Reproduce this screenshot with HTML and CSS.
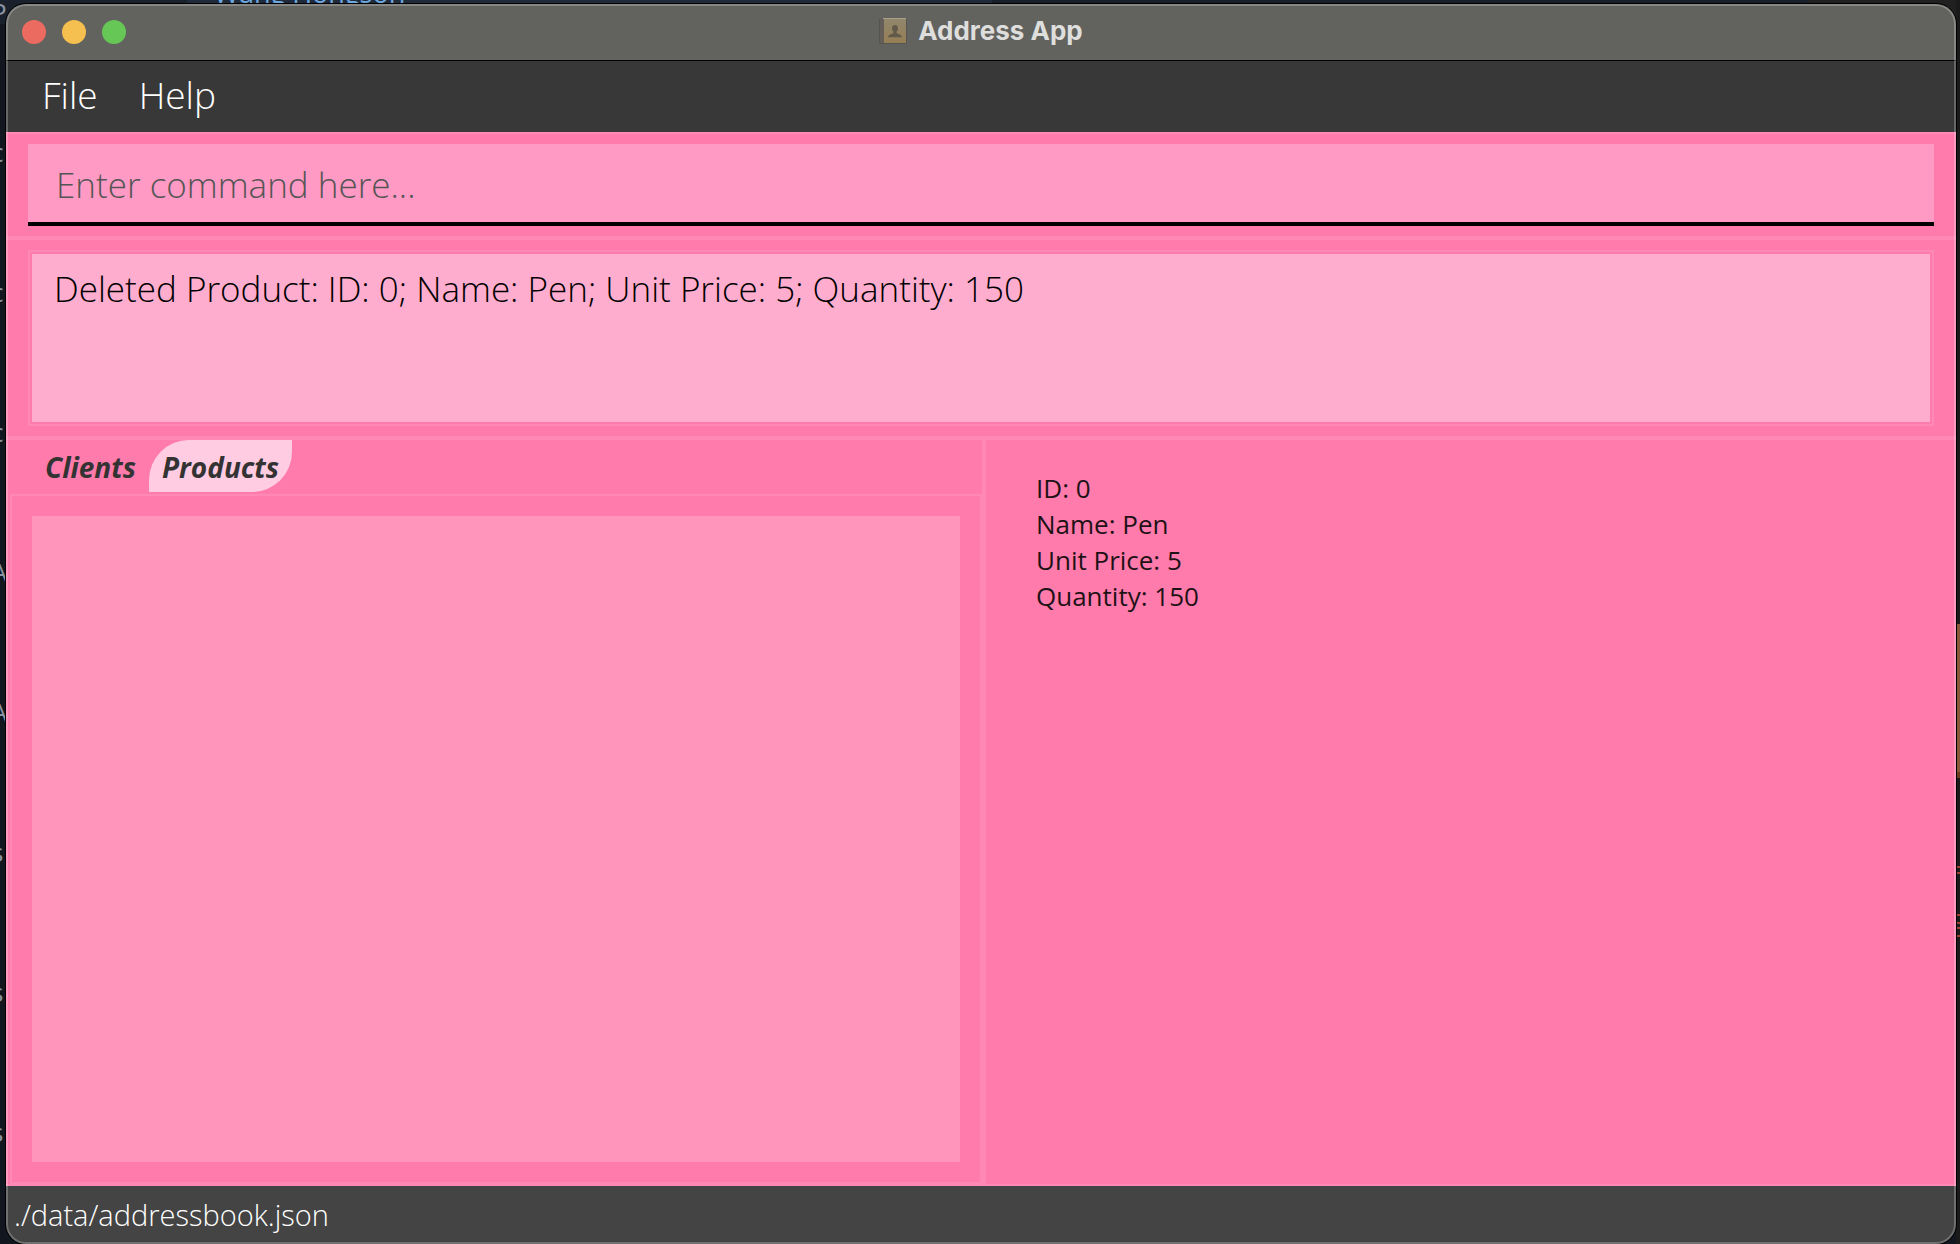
FILE: index.html
```html
<!DOCTYPE html>
<html lang="en">
<head>
<meta charset="utf-8">
<title>Address App</title>
<link rel="stylesheet" href="styles.css">
</head>
<body>
<div class="desktop" aria-hidden="true">
  <div class="behind-top"></div>
  <div class="behind-left">
    <span>P</span><span>c</span><span>c</span><span>c</span><span>A</span><span>A</span><span>s</span><span>s</span><span>s</span>
  </div>
  <div class="behind-right"><div class="behind-note"></div><div class="behind-marks"></div></div>
  <span class="behind-name">Wang Hongson</span>
</div>
<div class="window">
  <header class="titlebar">
    <div class="lights">
      <button class="light close" aria-label="Close"></button>
      <button class="light minimize" aria-label="Minimize"></button>
      <button class="light zoom" aria-label="Zoom"></button>
    </div>
    <h1 class="title">
      <svg class="book" viewBox="0 0 28 26" aria-hidden="true">
        <defs><linearGradient id="cover" x1="0" y1="0" x2="0" y2="1"><stop offset="0" stop-color="#91866c"/><stop offset="1" stop-color="#967f55"/></linearGradient></defs>
        <rect x="0" y="0" width="28" height="26" rx="2" fill="#575450"/>
        <rect x="1" y="0" width="4" height="25" fill="#655d58"/>
        <rect x="5" y="1" width="22" height="24" fill="url(#cover)"/>
        <rect x="4" y="0" width="23" height="1" fill="#aaa087"/>
        <path d="M16 7c-2 0-3 1.300-3 3.200 0 1.800.8 3 1.500 3.600v1.200c-1 1-5.500 1.300-5.500 4.300h14c0-3-4.500-3.300-5.500-4.300v-1.200c.7-.6 1.500-1.800 1.500-3.600C19 8.300 18 7 16 7z" fill="#615a4b"/>
      </svg>
      <span>Address App</span>
    </h1>
  </header>
  <nav class="menubar">
    <button class="menu">File</button>
    <button class="menu">Help</button>
  </nav>
  <main class="content">
    <section class="command-pane">
      <input class="command" type="text" placeholder="Enter command here..." aria-label="Command">
    </section>
    <section class="result-pane">
      <div class="result-frame">
        <textarea class="result" readonly aria-label="Result">Deleted Product: ID: 0; Name: Pen; Unit Price: 5; Quantity: 150</textarea>
      </div>
    </section>
    <div class="split">
      <section class="lists">
        <div class="tabs" role="tablist">
          <button class="tab" role="tab" aria-selected="false">Clients</button>
          <button class="tab selected" role="tab" aria-selected="true">Products</button>
        </div>
        <div class="list-pane"><div class="list"></div></div>
      </section>
      <section class="details">
        <p>ID: 0</p>
        <p>Name: Pen</p>
        <p>Unit Price: 5</p>
        <p>Quantity: 150</p>
      </section>
    </div>
  </main>
  <footer class="status">./data/addressbook.json</footer>
</div>
</body>
</html>
```
FILE: styles.css
```css
* { box-sizing: border-box; }

:root {
  --pink: #ff7bac;
  --line: #ff88b4;
}

body {
  margin: 0;
  height: 100vh;
  padding: 4px 4px 0 6px;
  overflow: hidden;
  background: #12161e;
  font-family: "Open Sans", sans-serif;
}

button {
  border: 0;
  padding: 0;
  background: none;
  font: inherit;
  color: inherit;
}

/* Slivers of other windows that show round the edges */
.desktop {
  position: absolute;
  inset: 0;
  overflow: hidden;
  font-size: 26px;
  color: #8a94a3;
}

.behind-top {
  position: absolute;
  inset: 0 0 auto 0;
  height: 24px;
  background: linear-gradient(90deg, #18212c 187px, #1f2b3b 187px 992px, #18202b 992px 1808px, #202020 1808px);
}

.behind-left {
  position: absolute;
  left: -9px;
  top: -4px;
}

.behind-left span {
  display: block;
  height: 140px;
  line-height: 32px;
}

.behind-right {
  position: absolute;
  inset: 0 0 0 auto;
  width: 4px;
  background: #1a1a1a;
}

.behind-note {
  position: absolute;
  top: 624px;
  right: 0;
  width: 4px;
  height: 154px;
  border-bottom: 6px solid #6b3c20;
  background: #87583a;
}

.behind-marks {
  position: absolute;
  top: 866px;
  right: 0;
  width: 4px;
  height: 72px;
  background: linear-gradient(#a04030 2px, transparent 2px 6px, #a04030 6px 8px, transparent 8px 48px, #a04030 48px 50px, transparent 50px 56px, #a04030 56px 58px, transparent 58px 61px, #a04030 61px 63px, transparent 63px 69px, #a04030 69px 71px, transparent 71px);
}

.behind-name {
  position: absolute;
  left: 214px;
  top: -23px;
  line-height: 32px;
  font-size: 27px;
  color: #6ea8e0;
}

.window {
  position: relative;
  display: flex;
  flex-direction: column;
  height: 100%;
  border-radius: 20px;
  overflow: hidden;
  box-shadow: 0 0 0 1px #000;
}

/* Translucent rim over the window's own colours */
.window::after {
  content: "";
  position: absolute;
  inset: 0;
  border: 2px solid rgba(255, 255, 255, .24);
  border-radius: 20px;
  pointer-events: none;
}

.titlebar {
  display: grid;
  grid-template-columns: 1fr auto 1fr;
  align-items: center;
  height: 57px;
  padding: 0 16px;
  border-bottom: 1px solid #000;
  background: #62625f;
}

.lights { display: flex; gap: 16px; }

.light {
  width: 24px;
  height: 24px;
  border-radius: 50%;
}

.close { background: #ec6b60; }
.minimize { background: #f5c04f; }
.zoom { background: #67c756; }

.title {
  display: flex;
  align-items: center;
  gap: 11px;
  margin: 0;
  padding-bottom: 2px;
  font: 700 26px/32px Inter, sans-serif;
  color: #dededd;
}

.book { width: 28px; height: 26px; }

.menubar {
  display: flex;
  gap: 41px;
  height: 71px;
  padding: 0 36px;
  background: #383838;
}

.menu {
  height: 68px;
  font-size: 37px;
  font-weight: 300;
  line-height: 68px;
  color: #fff;
}

.content {
  flex: 1;
  display: flex;
  flex-direction: column;
  min-height: 0;
  border-top: 2px solid var(--line);
  border-bottom: 2px solid var(--line);
  background: var(--pink);
}

.command-pane {
  padding: 10px 22px;
  border-bottom: 4px solid var(--line);
}

.command {
  display: block;
  width: 100%;
  height: 82px;
  padding: 2px 28px 0;
  border: 0;
  border-bottom: 4px solid #000;
  border-radius: 0;
  outline: 0;
  background: #ff9ac4;
  font: 300 35px/48px "Open Sans", sans-serif;
}

.command::placeholder { color: #555; opacity: 1; }

.result-pane {
  padding: 10px 22px;
  border-bottom: 4px solid var(--line);
}

.result-frame {
  padding: 2px;
  border: 2px solid var(--line);
}

.result {
  display: block;
  width: 100%;
  height: 168px;
  padding: 11px 22px;
  border: 0;
  outline: 0;
  resize: none;
  background: #ffadce;
  font: 300 35px/48px "Open Sans", sans-serif;
  color: #000;
}

.split {
  flex: 1;
  display: grid;
  grid-template-columns: 1fr 1fr;
  min-height: 0;
}

.lists {
  display: flex;
  flex-direction: column;
  margin-right: -5px;
  padding-left: 4px;
  border-right: 4px solid var(--line);
}

.tabs {
  display: flex;
  height: 54px;
  padding-left: 22px;
}

.tab {
  height: 52px;
  padding: 2px 13px 0;
  font-size: 28px;
  font-style: italic;
  font-weight: 700;
  color: #333;
}

.tab.selected {
  border-radius: 40px 0;
  background: #ffcce2;
}

.list-pane {
  flex: 1;
  display: flex;
  padding: 20px;
  border: 2px solid var(--line);
}

.list { flex: 1; background: #ff95bb; }

.details {
  padding: 30px 55px;
  font-size: 26px;
  line-height: 36px;
  color: #1e1216;
}

.details p { margin: 0; }

.status {
  height: 58px;
  padding: 0 8px;
  background: #444;
  font-size: 29px;
  font-weight: 300;
  line-height: 58px;
  color: #fff;
}
```
